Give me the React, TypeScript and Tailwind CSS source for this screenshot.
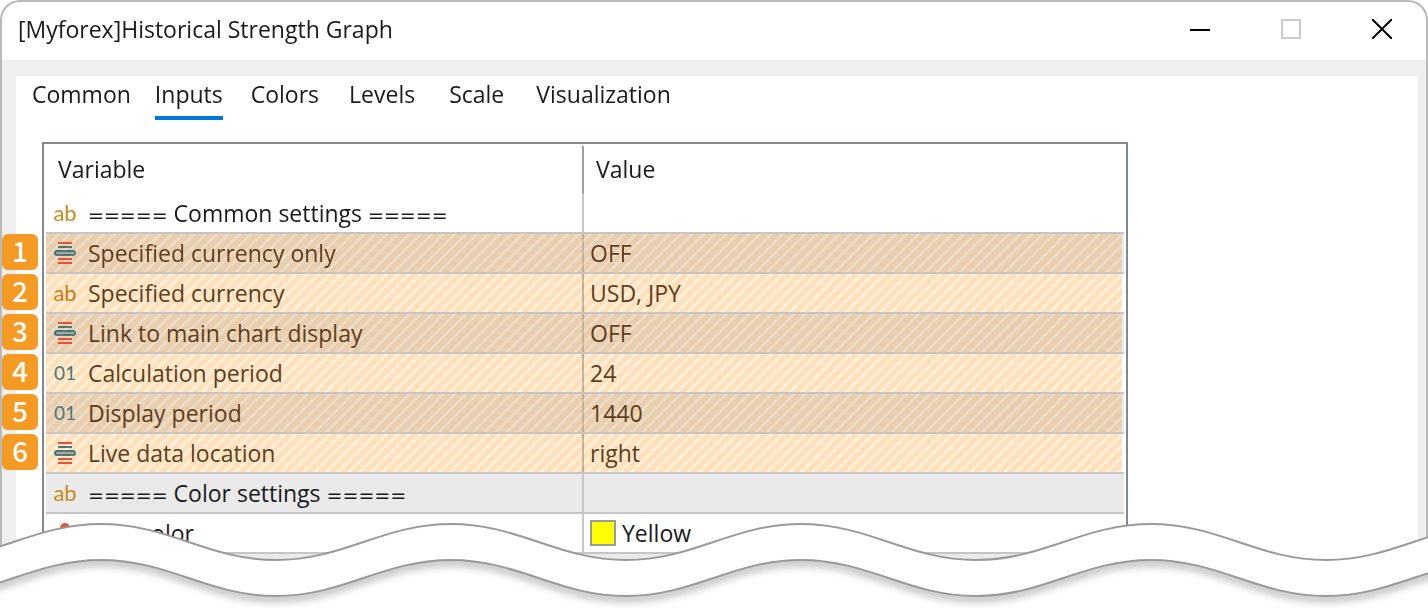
import React from 'react'

type Kind = 'text' | 'enum' | 'int' | 'color'

type Setting = {
  kind: Kind
  name: string
  value?: string
  swatch?: string
  badge?: number
}

const tabs = [
  { label: 'Common', className: 'mr-6' },
  { label: 'Inputs', className: 'mr-7' },
  { label: 'Colors', className: 'mr-[30px]' },
  { label: 'Levels', className: 'mr-[34px]' },
  { label: 'Scale', className: 'mr-8' },
  { label: 'Visualization', className: '' },
]

const settings: Setting[] = [
  { kind: 'text', name: '===== Common settings =====' },
  { kind: 'enum', name: 'Specified currency only', value: 'OFF', badge: 1 },
  { kind: 'text', name: 'Specified currency', value: 'USD, JPY', badge: 2 },
  { kind: 'enum', name: 'Link to main chart display', value: 'OFF', badge: 3 },
  { kind: 'int', name: 'Calculation period', value: '24', badge: 4 },
  { kind: 'int', name: 'Display period', value: '1440', badge: 5 },
  { kind: 'enum', name: 'Live data location', value: 'right', badge: 6 },
  { kind: 'text', name: '===== Color settings =====' },
  { kind: 'color', name: 'USD color', value: 'Yellow', swatch: 'bg-[#ffff00]' },
  { kind: 'color', name: '' },
]

const KindIcon = ({ kind }: { kind: Kind }) => {
  if (kind === 'text') return <span className="font-['Lato',sans-serif] text-[22px] leading-6 text-[#c98a1b]">ab</span>
  if (kind === 'int') return <span className="font-['Lato',sans-serif] text-[19px] leading-6 text-[#4c86a0]">01</span>
  if (kind === 'color') {
    return (
      <svg width="22" height="22" viewBox="0 0 22 22" aria-hidden="true">
        <circle cx="11" cy="6" r="5" fill="#e4573a" />
        <circle cx="6" cy="15" r="5" fill="#c98a1b" />
        <circle cx="16" cy="15" r="5" fill="#4c7f96" />
      </svg>
    )
  }
  return (
    <svg width="22" height="22" viewBox="0 0 22 22" aria-hidden="true">
      <path d="M4 1h14M4 17h14M4 21h14" stroke="#e85a3c" strokeWidth="2" />
      <path d="M4 5h14" stroke="#4c86a0" strokeWidth="2" />
      <rect x="1" y="9" width="20" height="4" rx="2" fill="#a9bcc4" stroke="#4c86a0" strokeWidth="2" />
    </svg>
  )
}

const Badge = ({ value }: { value: number }) => (
  <span className="absolute top-0 -left-11 flex h-9 w-9 items-center justify-center rounded-md bg-[#f59a23] pb-1 font-['Noto_Sans_CJK_JP',sans-serif] text-[28px] leading-8 font-medium text-white">
    {value}
  </span>
)

// the ===== rules around a section title are wider than the text font draws them
const Name = ({ text }: { text: string }) => (
  <span className="ml-3 whitespace-pre">
    {text.split(/(=+)/).map((part, i) =>
      part.startsWith('=') ? (
        <span key={i} className="font-['DejaVu_Sans',sans-serif] text-[19px] leading-none">{part}</span>
      ) : (
        part
      ),
    )}
  </span>
)

const Row = ({ setting, index }: { setting: Setting; index: number }) => (
  <tr className={`relative h-10 ${index % 2 ? 'bg-[#eaeaea]' : 'bg-white'} ${setting.badge ? 'text-[#5e4526]' : ''}`}>
    <td className="border-r-2 border-b-2 border-[#c6c6c6] p-0">
      <div className="flex h-8 items-center pl-2">
        <span className="flex w-[22px] shrink-0 justify-center">
          <KindIcon kind={setting.kind} />
        </span>
        <Name text={setting.name} />
      </div>
      {setting.badge && (
        <>
          <span className="pointer-events-none absolute top-0 right-[2px] bottom-[2px] left-0 bg-[repeating-linear-gradient(135deg,#fff0da_0px,#fff0da_2px,#ffe0ba_3px,#ffe0ba_7px,#fff0da_8px)] mix-blend-multiply" />
          <Badge value={setting.badge} />
        </>
      )}
    </td>
    <td className="border-b-2 border-[#c6c6c6] p-0">
      <div className="flex h-8 items-center pl-[6px]">
        {setting.swatch && <span className={`mr-[6px] h-[26px] w-[26px] border-2 border-[#9a9a9a] ${setting.swatch}`} />}
        {setting.value}
      </div>
    </td>
  </tr>
)

const TitleBar = () => (
  <header className="flex h-[58px] items-center justify-between pr-[34px] pb-1 pl-4">
    <h1>[Myforex]Historical Strength Graph</h1>
    <div className="flex items-center gap-[71px]">
      <button type="button" aria-label="Minimize">
        <svg className="block" width="20" height="20" viewBox="0 0 20 20">
          <path d="M0 11h20" stroke="#000" strokeWidth="2" />
        </svg>
      </button>
      <button type="button" aria-label="Maximize" disabled>
        <svg className="block" width="20" height="20" viewBox="0 0 20 20">
          <path d="M1 1h18v18H1z" fill="none" stroke="#cbcbcb" strokeWidth="2" />
        </svg>
      </button>
      <button type="button" aria-label="Close">
        <svg className="block" width="20" height="20" viewBox="0 0 20 20">
          <path d="M0 0l20 20M20 0L0 20" stroke="#000" strokeWidth="2" />
        </svg>
      </button>
    </div>
  </header>
)

// one wave is 350px wide with its crest at x = 101
const wave = (y: number) => {
  let d = `M-249 ${y}`
  for (let x = -249; x < 3200; x += 350) {
    d += ` C${x + 68} ${y} ${x + 107} ${y + 36} ${x + 175} ${y + 36}`
    d += ` S${x + 282} ${y} ${x + 350} ${y}`
  }
  return d
}

const TornEdge = () => (
  <svg className="absolute bottom-0 left-0 h-[92px] w-full" fill="none" aria-hidden="true">
    <defs>
      <filter id="soft" x="-5%" y="-50%" width="110%" height="200%">
        <feGaussianBlur stdDeviation="4" />
      </filter>
      <clipPath id="below">
        <path d={`${wave(44)} V120 H-249 Z`} />
      </clipPath>
    </defs>
    <path d={`${wave(8)} V120 H-249 Z`} fill="#fff" />
    <g clipPath="url(#below)">
      <path d={wave(46)} stroke="#000" strokeOpacity="0.35" strokeWidth="6" filter="url(#soft)" />
    </g>
    <path d={wave(8)} stroke="#999" strokeWidth="2" />
    <path d={wave(44)} stroke="#999" strokeWidth="2" />
  </svg>
)

const App = () => {
  return (
    <main className="relative overflow-hidden bg-white pb-[14px] font-['Open_Sans','Noto_Sans',sans-serif] text-[23px] leading-8 text-[#1a1a1a]">
      <div className="rounded-t-[20px] border-2 border-b-0 border-[#b9b9b9]">
        <TitleBar />
        <div className="bg-[#efefef] pt-4 pr-2 pl-[14px]">
          <section className="bg-white pl-[26px]">
            <div role="tablist" className="-ml-[10px] flex h-[66px] items-start pt-1">
              {tabs.map((tab) => (
                <button
                  key={tab.label}
                  type="button"
                  role="tab"
                  aria-selected={tab.label === 'Inputs'}
                  className={`-mt-1 h-11 border-b-4 pb-1 ${tab.label === 'Inputs' ? 'border-[#0078d7]' : 'border-transparent'} ${tab.className}`}
                >
                  {tab.label}
                </button>
              ))}
            </div>
            <div className="max-w-[1086px] border-2 border-b-0 border-[#828790] p-[2px] pb-0">
              <table className="w-full table-fixed border-separate border-spacing-0 text-left">
                <thead>
                  <tr className="h-12">
                    <th className="w-[538px] border-r-2 border-[#a0a0a0] p-0 pb-[2px] pl-3 font-normal">Variable</th>
                    <th className="p-0 pb-[2px] pl-3 font-normal">Value</th>
                  </tr>
                </thead>
                <tbody>
                  {settings.map((setting, i) => (
                    <Row key={i} setting={setting} index={i} />
                  ))}
                </tbody>
              </table>
            </div>
          </section>
        </div>
      </div>
      <TornEdge />
    </main>
  )
}

export default App
